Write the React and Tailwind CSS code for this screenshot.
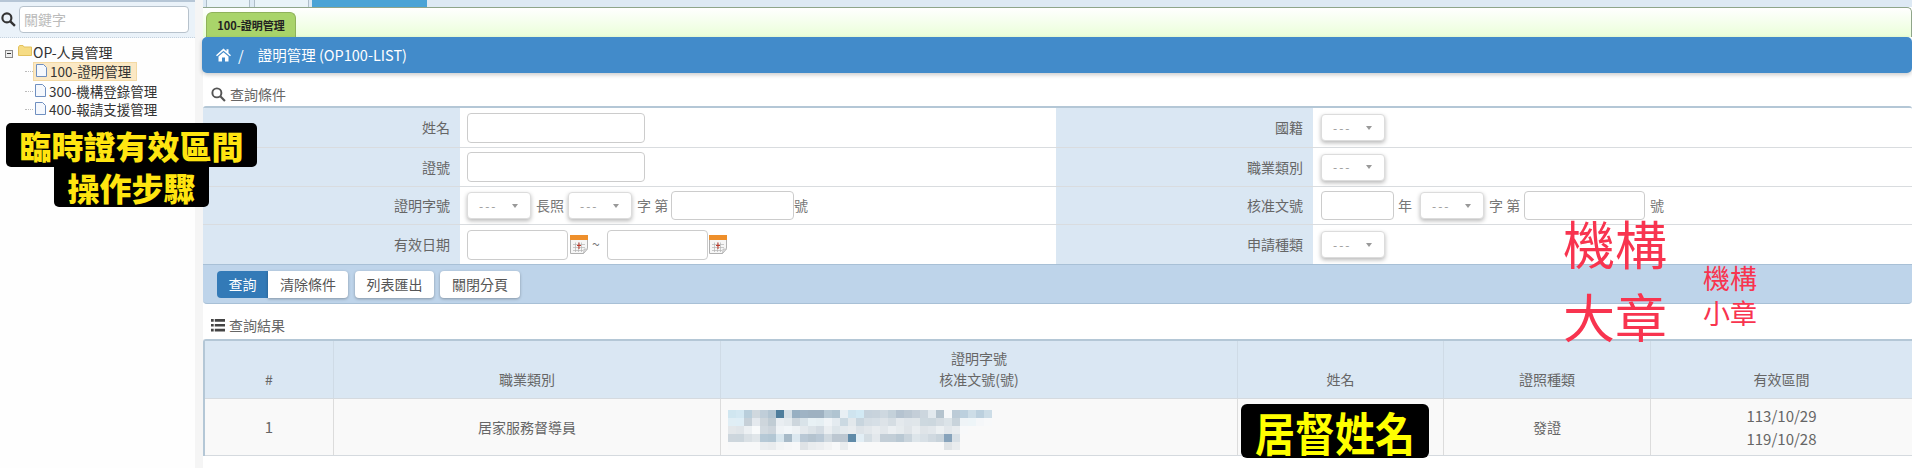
import React from "react";

const font = { fontFamily: '"Noto Sans CJK TC","Noto Sans",sans-serif' };

function Cal() {
  return (
    <svg width="18" height="19" viewBox="0 0 18 19" className="shrink-0 block">
      <path d="M0.5 0.5H17.5V13.5L13.5 18.5H0.5Z" fill="#f6f6f6" stroke="#b0b0b0" />
      <path d="M13.5 18.5L14 14H17.5Z" fill="#dcdcdc" stroke="#b0b0b0" strokeWidth="0.6" />
      <rect x="0" y="0" width="18" height="5" fill="#ee8f2b" />
      <path d="M3 9.5H15M3 12.5H15M3 15.5H13M5.5 7.5V17M8.5 7.5V17M11.5 7.5V17" stroke="#b4b4b4" strokeWidth="0.7" fill="none" />
      <path d="M9 7.5V14M7 10.5H11" stroke="#c0392b" strokeWidth="1" fill="none" />
    </svg>
  );
}

function Sel() {
  return (
    <div className="w-[64px] h-[27px] shrink-0 bg-white border border-[#dcdcdc] rounded-[4px] shadow-[0_2px_4px_rgba(0,0,0,0.28)] flex items-center justify-between pl-[11px] pr-[12px] text-[12px] tracking-[2px] text-[#999]">
      <span>---</span>
      <span className="w-0 h-0 border-l-[3px] border-r-[3px] border-t-[4px] border-l-transparent border-r-transparent border-t-[#999]" />
    </div>
  );
}

function Inp({ w, h = "h-[30px]" }) {
  return <div className={`${w} ${h} shrink-0 bg-white border border-[#ccc] rounded-[4px]`} />;
}

function Lb({ children, last }) {
  return (
    <div className={`bg-[#dae7f3] flex items-center justify-end pr-[10px] text-[14px] text-[#666] ${last ? "" : "border-b border-[#d9dcdf]"}`}>
      {children}
    </div>
  );
}

function Val({ children, last, right }) {
  return (
    <div className={`bg-white flex items-center ${right ? "pl-[8px]" : "pl-[7px]"} text-[14px] text-[#777] ${last ? "" : "border-b border-[#d9dcdf]"}`}>
      {children}
    </div>
  );
}

function FileIcon() {
  return (
    <svg width="11" height="13" viewBox="0 0 11 13" className="shrink-0 -mt-[2px]">
      <path d="M0.5 0.5H7.5L10.5 3.5V12.5H0.5Z" fill="#f5f8fd" stroke="#6f8fc0" />
    </svg>
  );
}

function TreeFile({ label, active, h }) {
  return (
    <div className={`flex items-center ${h} text-[13.5px] text-[#333]`}>
      <span className="w-[8px] ml-[25px] border-t border-dotted border-[#bbb]" />
      {active ? (
        <span className="h-[19px] w-[104px] flex items-center gap-[3px] pl-[2px] bg-[#fbe8c4] border border-[#f3d9a4]">
          <FileIcon />
          <span className="whitespace-nowrap">{label}</span>
        </span>
      ) : (
        <span className="flex items-center gap-[3px] ml-[2px]">
          <FileIcon />
          <span className="whitespace-nowrap">{label}</span>
        </span>
      )}
    </div>
  );
}

const mosaic = [
  "d0e6f0 d4e8f2 b9cedb d0d8de c0ced9 b3c5d2 4e7d9c d5dfe6 97afc2 9fb3c4 9eb1c1 9eb1c1 b7c9d5 b0c4d1 e8eff4 cfe4ef d2e9f4 c6d2dc c8d3dc ced8e0 c4d1da b5c3d0 bcc8d3 c4ced8 ccd6de e2e9ee b4c3ce f5f7f9 bccbd7 bcd0de cddde7 bcd0de cddde7",
  "e0eef5 dfeef6 c6d0d8 e4e9ee ced6dc c0ccd4 e9eef2 e4eaee cdd6dd d9e3e9 e8f1f5 e6eff3 f0f4f7 e4ebf0 cbd9e2 e2e8ec c8d5de d4dde4 d6dfe6 dde3e8 d5dde3 e4e9ed dfe5ea e0e6ea cdd8df ccd7de d4dce2 dbe3e8 c8d3db eff4f7 eef5f8 f5f7f9 f8f9fa",
  "e3e7ea e0e5e9 ecf0f3 f8fafb d2dae0 cdd5dc eff3f6 f2f6f9 eef2f5 e4e9ed dce3e8 d4dce3 eaeef1 dde5ea e4eaee e8ecef dde3e8 e2e7eb e8ecef e2e7eb ebeff2 e6ebee dfe4e8 e9edf0 dfe4e8 e2e7eb ecf0f2 e2e7eb e8ecef f8f9fa f9f9f9 f9f9f9 f9f9f9",
  "cdd6dd ccd6dd d9e0e5 e0e6ea b6c9d6 b3c7d4 d8e6ee a7bac8 dce8f0 b9c8d5 b4c3cf b9c8d5 d0d9e0 bcc7d1 bcc7d1 5f8aa8 e2eef5 d4dde3 e3e8ec c3ced7 c2ced7 b9c8d3 c9d4dc dde5ea d8e0e6 d0d9e0 c8d3db 87a3bb d8e0e6 f9f9f9 f9f9f9 f9f9f9 f9f9f9",
  "f7f8f9 f7f8f9 f7f8f9 f7f8f9 ebeef0 e9ecee f2f4f5 f5f6f7 f7f8f9 dfe3e6 e9ecee eceef0 f2f3f4 f7f8f9 e9ecee f7f8f9 f9f9f9 f9f9f9 f9f9f9 f9f9f9 f9f9f9 f9f9f9 f9f9f9 f9f9f9 f9f9f9 f9f9f9 f9f9f9 dfe3e6 e9ecee f9f9f9 f9f9f9 f9f9f9 f9f9f9",
].map((r) => r.split(" "));

const cols = "grid grid-cols-[129px_387px_517px_206px_207px_1fr]";

export default function App() {
  return (
    <div style={font} className="relative flex w-full h-[468px] overflow-hidden bg-white text-[#666]">
      {/* sidebar */}
      <aside className="w-[195px] shrink-0 flex flex-col bg-[#fefefe]">
        <div className="h-[2px] bg-[#b6c6d6]" />
        <div className="h-[36px] bg-[#eaf2f9] border-b border-dotted border-[#c5d2de] flex items-center pl-[1px] pr-[6px] gap-[3px]">
          <svg width="15" height="15" viewBox="0 0 14 14" className="shrink-0">
            <circle cx="5.5" cy="5.5" r="4.2" fill="none" stroke="#333" strokeWidth="2" />
            <path d="M8.7 8.7L13 13" stroke="#333" strokeWidth="2.2" />
          </svg>
          <div className="flex-1 h-[27px] bg-white border border-[#b7c2cc] rounded-[4px] flex items-center pl-[4px] text-[14px] text-[#bbb]">關鍵字</div>
        </div>
        <div className="pt-[5px]">
          <div className="flex items-center h-[18px] pl-[5px] text-[14px] text-[#333]">
            <span className="w-[8px] h-[8px] mt-[3px] border border-[#888] bg-[#eee] flex items-center justify-center mr-[5px]">
              <span className="w-[4px] h-[1px] bg-[#333]" />
            </span>
            <svg width="14" height="11" viewBox="0 0 14 11" className="mr-[1px] -mt-[3px]">
              <path d="M0.5 2V10.5H13.5V2H6L5 0.5H1.5Z" fill="#f6dc85" stroke="#e3c25f" />
            </svg>
            <span>OP-人員管理</span>
          </div>
          <TreeFile label="100-證明管理" active h="h-[21px]" />
          <TreeFile label="300-機構登錄管理" h="h-[18px]" />
          <TreeFile label="400-報請支援管理" h="h-[19px]" />
        </div>
      </aside>
      <div className="w-[8px] shrink-0 bg-[#f5f5f5]" />

      {/* main */}
      <main className="flex-1 min-w-0 flex flex-col">
        <div className="h-[7px] flex items-stretch bg-[#dde9f4] pl-[3px]">
          <div className="w-[44px] bg-[#e9f3f8] border-x border-[#aebdc8]" />
          <div className="w-[55px] ml-[4px] bg-[#e9f3f8] border-x border-[#aebdc8]" />
          <div className="w-[115px] ml-[3px] bg-[#4aa3d6]" />
        </div>
        <div className="h-[30px] bg-gradient-to-b from-white to-[#eaffd8] border-t border-r border-[#8fa58a] rounded-tr-[5px] flex items-end pl-[3px]">
          <div className="w-[90px] h-[25px] bg-[#a9d46a] border border-[#8fb25a] border-b-0 rounded-t-[6px] flex items-center justify-center text-[11px] font-bold text-[#222]">
            100-證明管理
          </div>
        </div>
        <div className="h-[36px] bg-[#428bca] rounded-[5px] -ml-[1px] shadow-[0_2px_4px_rgba(0,0,0,0.2)] flex items-center pl-[14px] text-white text-[14.5px]">
          <svg width="15" height="14" viewBox="0 0 15 14" fill="#fff">
            <path d="M7.5 0.5L0 7.2L1 8.3L7.5 2.7L14 8.3L15 7.2L12.5 5V1.2H10.5V3.2ZM2.5 8.5V13.5H6V9.5H9V13.5H12.5V8.5L7.5 4.2Z" />
          </svg>
          <span className="ml-[7px]">/</span>
          <span className="ml-[14px]">證明管理 (OP100-LIST)</span>
        </div>

        <div className="h-[33px] flex items-end pb-[1px] pl-[8px] text-[14px] text-[#666] gap-[4px]">
          <svg width="15" height="15" viewBox="0 0 14 14" className="mb-[3px]">
            <circle cx="5.5" cy="5.5" r="4.2" fill="none" stroke="#555" strokeWidth="1.8" />
            <path d="M8.7 8.7L13 13" stroke="#555" strokeWidth="2" />
          </svg>
          <span>查詢條件</span>
        </div>

        {/* form */}
        <section className="border-t-2 border-[#b4c7d6] rounded-t-[3px] overflow-hidden">
          <div className="grid grid-cols-[257px_596px_257px_1fr] grid-rows-[40px_39px_38px_39px]">
            <Lb>姓名</Lb>
            <Val><Inp w="w-[178px]" /></Val>
            <Lb>國籍</Lb>
            <Val right><Sel /></Val>

            <Lb>證號</Lb>
            <Val><Inp w="w-[178px]" /></Val>
            <Lb>職業類別</Lb>
            <Val right><Sel /></Val>

            <Lb>證明字號</Lb>
            <Val>
              <Sel />
              <span className="ml-[5px]">長照</span>
              <span className="ml-[4px]"><Sel /></span>
              <span className="ml-[5px] w-[32px] shrink-0">字 第</span>
              <span className="ml-[2px]"><Inp w="w-[123px]" h="h-[29px]" /></span>
              <span>號</span>
            </Val>
            <Lb>核准文號</Lb>
            <Val right>
              <Inp w="w-[73px]" h="h-[29px]" />
              <span className="ml-[4px]">年</span>
              <span className="ml-[8px]"><Sel /></span>
              <span className="ml-[5px] w-[32px] shrink-0">字 第</span>
              <span className="ml-[3px]"><Inp w="w-[121px]" h="h-[29px]" /></span>
              <span className="ml-[5px]">號</span>
            </Val>

            <Lb last>有效日期</Lb>
            <Val last>
              <Inp w="w-[101px]" />
              <span className="ml-[2px]"><Cal /></span>
              <span className="ml-[4px] w-[15px] shrink-0 text-[14px]">~</span>
              <Inp w="w-[101px]" />
              <span className="ml-[1px]"><Cal /></span>
            </Val>
            <Lb last>申請種類</Lb>
            <Val last right><Sel /></Val>
          </div>
          <div className="h-[40px] bg-[#bed4ea] border-y border-[#a8c0d6] rounded-b-[4px] flex items-center pl-[14px]">
            <button className="w-[51px] h-[27px] bg-[#337ab7] text-white text-[14px] rounded-l-[4px]">查詢</button>
            <button className="w-[80px] h-[27px] bg-white text-[#555] text-[14px] rounded-r-[4px] shadow-[0_1px_3px_rgba(0,0,0,0.3)]">清除條件</button>
            <button className="w-[79px] h-[27px] ml-[7px] bg-white text-[#555] text-[14px] rounded-[4px] shadow-[0_1px_3px_rgba(0,0,0,0.3)]">列表匯出</button>
            <button className="w-[80px] h-[27px] ml-[6px] bg-white text-[#555] text-[14px] rounded-[4px] shadow-[0_1px_3px_rgba(0,0,0,0.3)]">關閉分頁</button>
          </div>
        </section>

        <div className="h-[35px] flex items-end pb-[3px] pl-[8px] gap-[4px] text-[14px] text-[#666]">
          <svg width="14" height="13" viewBox="0 0 13 12" fill="#444" className="mb-[4px]">
            <path d="M0 0H2.5V2.5H0ZM3.5 0H13V2.5H3.5ZM0 4.5H2.5V7H0ZM3.5 4.5H13V7H3.5ZM0 9H2.5V11.5H0ZM3.5 9H13V11.5H3.5Z" />
          </svg>
          <span>查詢結果</span>
        </div>

        {/* table */}
        <section className="border-t-2 border-l-2 border-[#b4c7d6] rounded-tl-[3px] text-[14px] text-[#666]">
          <div className={`${cols} h-[58px] bg-[#dae7f3] text-center border-b border-[#d5dadf]`}>
            <div className="flex items-end justify-center pb-[8px] border-r border-[#cfdbe6]">#</div>
            <div className="flex items-end justify-center pb-[8px] border-r border-[#cfdbe6]">職業類別</div>
            <div className="flex flex-col justify-end pb-[8px] border-r border-[#cfdbe6] leading-[21px]">
              <div>證明字號</div>
              <div>核准文號(號)</div>
            </div>
            <div className="flex items-end justify-center pb-[8px] border-r border-[#cfdbe6]">姓名</div>
            <div className="flex items-end justify-center pb-[8px] border-r border-[#cfdbe6]">證照種類</div>
            <div className="flex items-end justify-center pb-[8px]">有效區間</div>
          </div>
          <div className={`${cols} h-[57px] bg-[#f9f9f9] text-center border-b border-[#d5dadf]`}>
            <div className="flex items-center justify-center border-r border-[#dcdcdc] text-[15px]">1</div>
            <div className="flex items-center justify-center border-r border-[#dcdcdc]">居家服務督導員</div>
            <div className="flex items-center pl-[7px] pt-[6px] border-r border-[#dcdcdc]">
              <svg width="264" height="40" viewBox="0 0 264 40" shapeRendering="crispEdges">
                {mosaic.flatMap((row, y) =>
                  row.map((c, x) => (
                    <rect key={`${x}-${y}`} x={x * 8} y={y * 8} width="8" height="8" fill={`#${c}`} />
                  ))
                )}
              </svg>
            </div>
            <div className="flex items-center justify-center border-r border-[#dcdcdc]" />
            <div className="flex items-center justify-center border-r border-[#dcdcdc]">發證</div>
            <div className="flex flex-col items-center justify-center leading-[23px] text-[15px]">
              <div>113/10/29</div>
              <div>119/10/28</div>
            </div>
          </div>
        </section>
      </main>

      {/* annotations laid over the screenshot */}
      <div className="absolute left-[6px] top-[123px] w-[251px] h-[44px] bg-black rounded-[5px] flex items-center justify-center text-[32px] leading-none font-black text-[#ffe510] whitespace-nowrap">臨時證有效區間</div>
      <div className="absolute left-[54px] top-[167px] w-[155px] h-[40px] bg-black rounded-b-[5px] flex items-center justify-center text-[32px] leading-none font-black text-[#ffe510] whitespace-nowrap">操作步驟</div>
      <div className="absolute left-[1241px] top-[404px] w-[188px] h-[54px] bg-black rounded-[6px] flex items-center justify-center text-[#ffff00] whitespace-nowrap">
        <span className="block text-[40px] leading-none font-bold scale-y-[1.15]">居督姓名</span>
      </div>
      <div className="absolute left-[1563px] top-[206px] text-[52px] leading-[73px] text-[#f8344f] whitespace-nowrap">機構<br />大章</div>
      <div className="absolute left-[1703px] top-[260px] text-[27px] leading-[35px] text-[#f8344f] whitespace-nowrap">機構<br />小章</div>
    </div>
  );
}
